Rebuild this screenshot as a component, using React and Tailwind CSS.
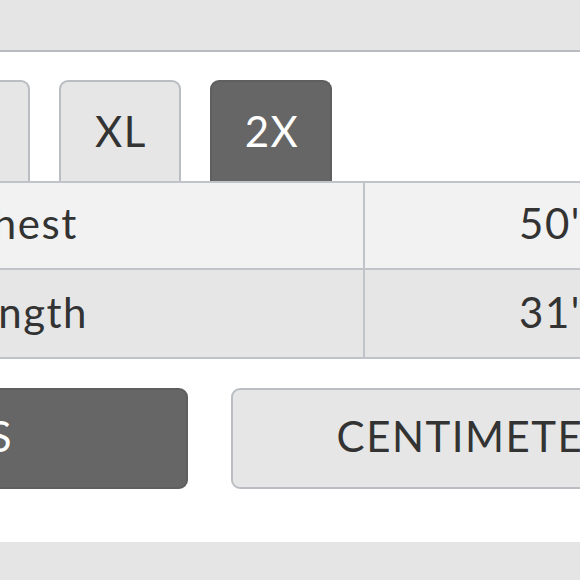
export default function App() {
  const tabs = ["M", "L", "XL", "2X"];
  return (
    <div
      className="w-[580px] h-[580px] overflow-hidden bg-white relative"
      style={{ fontFamily: "Lato, 'Open Sans', sans-serif" }}
    >
      <div className="h-[52px] bg-[#e5e5e5] border-b-2 border-[#b8bcc0]" />
      <div className="ml-[-322px] w-[1064px] pt-[28px] tracking-[1.5px]">
        <div className="flex gap-[29px] pl-[79px] h-[101px] items-stretch">
          {tabs.map((t) => (
            <div
              key={t}
              className={
                t === "2X"
                  ? "w-[122px] rounded-t-[9px] border-2 border-b-0 border-[#5f5f5f] bg-[#666666] text-white flex items-center justify-center text-[42px] pl-[2px]"
                  : "w-[122px] rounded-t-[9px] border-2 border-b-0 border-[#babec2] bg-[#e6e6e6] text-[#333333] flex items-center justify-center text-[42px] pl-[2px]"
              }
            >
              {t}
            </div>
          ))}
        </div>
        <div className="border-t-2 border-b-2 border-[#c0c4c8] text-[#333333] text-[42px]">
          <div className="grid grid-cols-[687px_1fr] h-[87px] bg-[#f2f2f2] border-b-2 border-[#c0c4c8]">
            <div className="flex items-center justify-center border-r-2 border-[#c0c4c8] pb-[4px]">Chest</div>
            <div className="flex items-center justify-center pb-[4px]">50"</div>
          </div>
          <div className="grid grid-cols-[687px_1fr] h-[87px] bg-[#e6e6e6]">
            <div className="flex items-center justify-center border-r-2 border-[#c0c4c8] pb-[2px]">Length</div>
            <div className="flex items-center justify-center pb-[2px]">31"</div>
          </div>
        </div>
        <div className="flex gap-[43px] mt-[29px]">
          <div className="w-[510px] h-[101px] rounded-[9px] border-2 border-[#5f5f5f] bg-[#666666] text-white flex items-center justify-center text-[42px] pb-[4px]">
            INCHES
          </div>
          <div className="w-[510px] h-[101px] rounded-[9px] border-2 border-[#babec2] bg-[#e6e6e6] text-[#333333] flex items-center justify-center text-[42px] pb-[4px]">
            CENTIMETERS
          </div>
        </div>
      </div>
      <div className="absolute left-0 right-0 top-[542px] bottom-0 bg-[#e5e5e5]" />
    </div>
  );
}
